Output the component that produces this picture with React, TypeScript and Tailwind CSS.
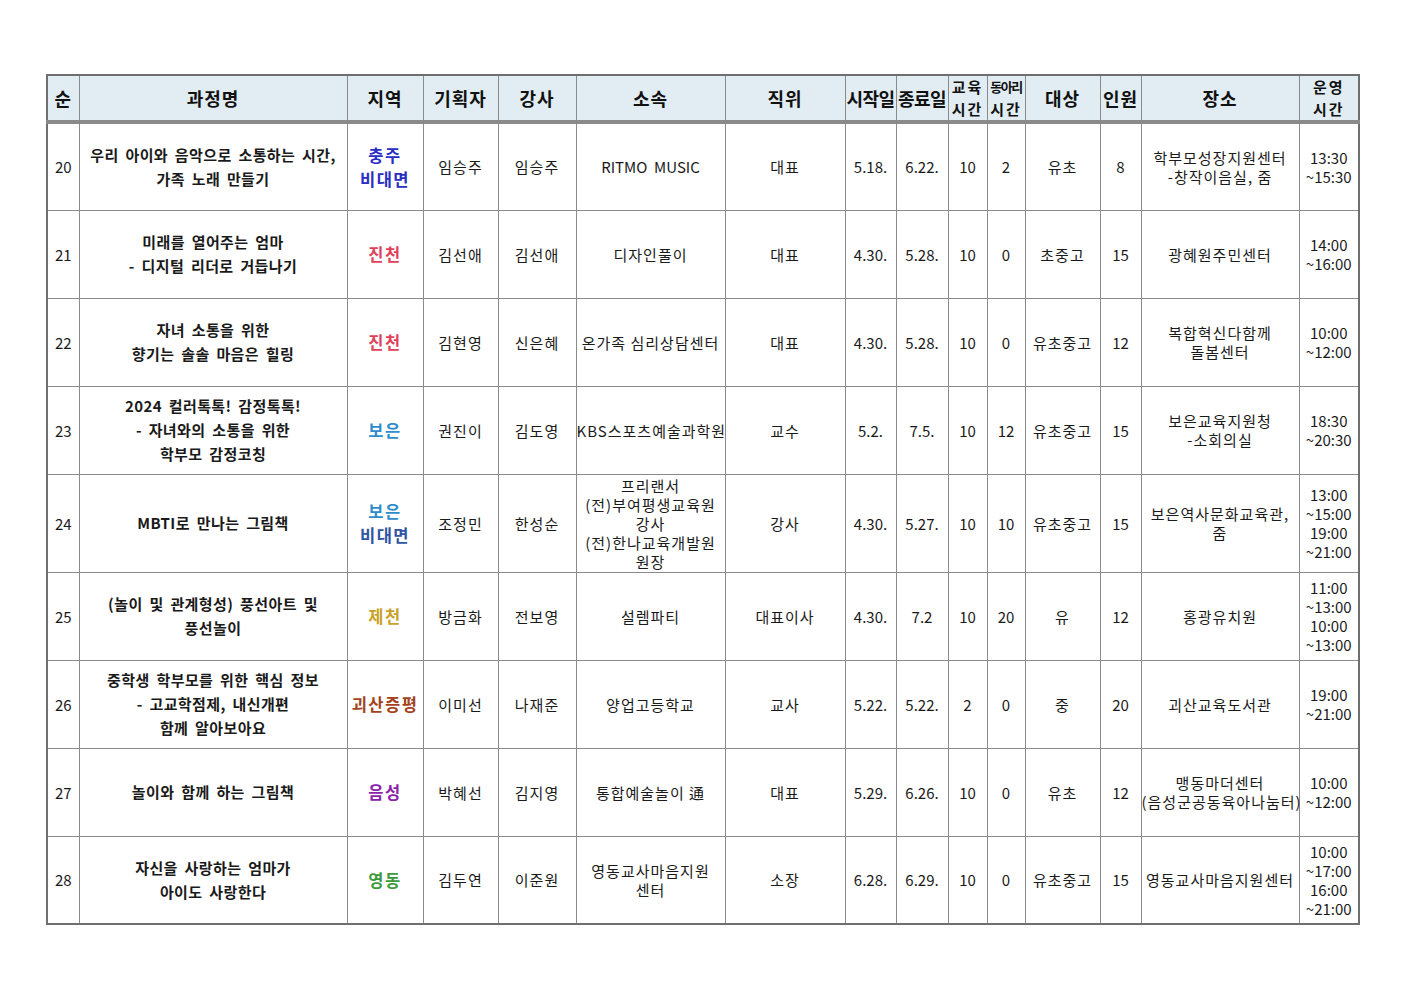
import React from "react"

type Row = {
  no: string
  title: string[]
  region: { text: string; color: string }[]
  planner: string
  teacher: string
  org: string[]
  position: string
  start: string
  end: string
  eduHours: string
  clubHours: string
  target: string
  count: string
  place: string[]
  time: string[]
  tall?: boolean
}

const rows: Row[] = [
  {
    no: "20",
    title: ["우리 아이와 음악으로 소통하는 시간,", "가족 노래 만들기"],
    region: [
      { text: "충주", color: "text-[#2a2ec4]" },
      { text: "비대면", color: "text-[#2a2ec4]" },
    ],
    planner: "임승주",
    teacher: "임승주",
    org: ["RITMO  MUSIC"],
    position: "대표",
    start: "5.18.",
    end: "6.22.",
    eduHours: "10",
    clubHours: "2",
    target: "유초",
    count: "8",
    place: ["학부모성장지원센터", "-창작이음실, 줌"],
    time: ["13:30", "~15:30"],
  },
  {
    no: "21",
    title: ["미래를 열어주는 엄마", "- 디지털 리더로 거듭나기"],
    region: [{ text: "진천", color: "text-[#e0405a]" }],
    planner: "김선애",
    teacher: "김선애",
    org: ["디자인풀이"],
    position: "대표",
    start: "4.30.",
    end: "5.28.",
    eduHours: "10",
    clubHours: "0",
    target: "초중고",
    count: "15",
    place: ["광혜원주민센터"],
    time: ["14:00", "~16:00"],
  },
  {
    no: "22",
    title: ["자녀 소통을 위한", "향기는 솔솔 마음은 힐링"],
    region: [{ text: "진천", color: "text-[#e0405a]" }],
    planner: "김현영",
    teacher: "신은혜",
    org: ["온가족 심리상담센터"],
    position: "대표",
    start: "4.30.",
    end: "5.28.",
    eduHours: "10",
    clubHours: "0",
    target: "유초중고",
    count: "12",
    place: ["복합혁신다함께", "돌봄센터"],
    time: ["10:00", "~12:00"],
  },
  {
    no: "23",
    title: ["2024 컬러톡톡! 감정톡톡!", "- 자녀와의 소통을 위한", "학부모 감정코칭"],
    region: [{ text: "보은", color: "text-[#2e8ccb]" }],
    planner: "권진이",
    teacher: "김도영",
    org: ["KBS스포츠예술과학원"],
    position: "교수",
    start: "5.2.",
    end: "7.5.",
    eduHours: "10",
    clubHours: "12",
    target: "유초중고",
    count: "15",
    place: ["보은교육지원청", "-소회의실"],
    time: ["18:30", "~20:30"],
  },
  {
    no: "24",
    title: ["MBTI로 만나는 그림책"],
    region: [
      { text: "보은", color: "text-[#2e8ccb]" },
      { text: "비대면", color: "text-[#2f54a4]" },
    ],
    planner: "조정민",
    teacher: "한성순",
    org: ["프리랜서", "(전)부여평생교육원", "강사", "(전)한나교육개발원", "원장"],
    position: "강사",
    start: "4.30.",
    end: "5.27.",
    eduHours: "10",
    clubHours: "10",
    target: "유초중고",
    count: "15",
    place: ["보은역사문화교육관,", "줌"],
    time: ["13:00", "~15:00", "19:00", "~21:00"],
    tall: true,
  },
  {
    no: "25",
    title: ["(놀이 및 관계형성) 풍선아트 및", "풍선놀이"],
    region: [{ text: "제천", color: "text-[#c9a227]" }],
    planner: "방금화",
    teacher: "전보영",
    org: ["설렘파티"],
    position: "대표이사",
    start: "4.30.",
    end: "7.2",
    eduHours: "10",
    clubHours: "20",
    target: "유",
    count: "12",
    place: ["홍광유치원"],
    time: ["11:00", "~13:00", "10:00", "~13:00"],
  },
  {
    no: "26",
    title: ["중학생 학부모를 위한 핵심 정보", "- 고교학점제, 내신개편", "함께 알아보아요"],
    region: [{ text: "괴산증평", color: "text-[#a4421c]" }],
    planner: "이미선",
    teacher: "나재준",
    org: ["양업고등학교"],
    position: "교사",
    start: "5.22.",
    end: "5.22.",
    eduHours: "2",
    clubHours: "0",
    target: "중",
    count: "20",
    place: ["괴산교육도서관"],
    time: ["19:00", "~21:00"],
  },
  {
    no: "27",
    title: ["놀이와 함께 하는 그림책"],
    region: [{ text: "음성", color: "text-[#8a22ab]" }],
    planner: "박혜선",
    teacher: "김지영",
    org: ["통합예술놀이 通"],
    position: "대표",
    start: "5.29.",
    end: "6.26.",
    eduHours: "10",
    clubHours: "0",
    target: "유초",
    count: "12",
    place: ["맹동마더센터", "(음성군공동육아나눔터)"],
    time: ["10:00", "~12:00"],
  },
  {
    no: "28",
    title: ["자신을 사랑하는 엄마가", "아이도 사랑한다"],
    region: [{ text: "영동", color: "text-[#3c9a3c]" }],
    planner: "김두연",
    teacher: "이준원",
    org: ["영동교사마음지원", "센터"],
    position: "소장",
    start: "6.28.",
    end: "6.29.",
    eduHours: "10",
    clubHours: "0",
    target: "유초중고",
    count: "15",
    place: ["영동교사마음지원센터"],
    time: ["10:00", "~17:00", "16:00", "~21:00"],
  },
]

const widths = [32, 268, 76, 75, 78, 149, 120, 51, 52, 39, 38, 75, 41, 158, 60]

function Lines({ lines }: { lines: string[] }) {
  return (
    <>
      {lines.map((l, i) => (
        <div key={i} className="whitespace-pre">
          {l}
        </div>
      ))}
    </>
  )
}

// header cell: size is set on the inner element
const th = "border border-[#8a8a8a] border-b-4 border-b-double border-b-[#8a8a8a] bg-[#e1edf2] p-0 text-center align-middle font-bold text-[#111]"
const td = "border border-[#8a8a8a] p-0 text-center align-middle text-[15px] leading-[19px] text-[#1a1a1a]"
const ko = td + " tracking-[1px]"

function H({ children, tight }: { children: React.ReactNode; tight?: boolean }) {
  return (
    <th className={th}>
      <div className={"whitespace-nowrap text-[18px] leading-[22px] " + (tight ? "tracking-[-0.5px]" : "tracking-[1px]")}>
        {children}
      </div>
    </th>
  )
}

function H2({ top, small }: { top: string; small?: boolean }) {
  return (
    <th className={th}>
      <div className="whitespace-nowrap text-[15px] leading-[22px] tracking-[2px]">
        {small ? <div className="text-[13px] tracking-[-1.5px]">{top}</div> : <div>{top}</div>}
        <div>시간</div>
      </div>
    </th>
  )
}

export default function App() {
  return (
    <div
      className="min-h-[992px] w-[1403px] bg-white pl-[46px] pt-[74px]"
      style={{ fontFamily: '"Noto Sans CJK KR", "Noto Sans", sans-serif' }}
    >
      {/* 교육 과정 표 */}
      <table className="w-[1312px] table-fixed border-collapse border-2 border-[#6f6f6f]">
        <colgroup>
          {widths.map((w, i) => (
            <col key={i} style={{ width: w }} />
          ))}
        </colgroup>
        <thead>
          <tr className="h-[46px]">
            <H>순</H>
            <H>과정명</H>
            <H>지역</H>
            <H>기획자</H>
            <H>강사</H>
            <H>소속</H>
            <H>직위</H>
            <H tight>시작일</H>
            <H tight>종료일</H>
            <H2 top="교육" />
            <H2 top="동아리" small />
            <H>대상</H>
            <H>인원</H>
            <H>장소</H>
            <H2 top="운영" />
          </tr>
        </thead>
        <tbody>
          {rows.map((r) => (
            <tr key={r.no} className={r.tall ? "h-[98px]" : "h-[88px]"}>
              <td className={td}>{r.no}</td>
              <td className={td + " text-[15.5px] font-bold leading-[24px] tracking-[0.4px] [word-spacing:3px]"}>
                <Lines lines={r.title} />
              </td>
              <td className={td + " text-[16.5px] font-semibold leading-[24px] tracking-[1.5px]"}>
                {r.region.map((g, i) => (
                  <div key={i} className={g.color}>
                    {g.text}
                  </div>
                ))}
              </td>
              <td className={ko}>{r.planner}</td>
              <td className={ko}>{r.teacher}</td>
              <td className={r.org[0].startsWith("RITMO") ? td : ko}>
                <Lines lines={r.org} />
              </td>
              <td className={ko}>{r.position}</td>
              <td className={td}>{r.start}</td>
              <td className={td}>{r.end}</td>
              <td className={td}>{r.eduHours}</td>
              <td className={td}>{r.clubHours}</td>
              <td className={ko}>{r.target}</td>
              <td className={td}>{r.count}</td>
              <td className={ko}>
                <Lines lines={r.place} />
              </td>
              <td className={td}>
                <Lines lines={r.time} />
              </td>
            </tr>
          ))}
        </tbody>
      </table>
    </div>
  )
}
